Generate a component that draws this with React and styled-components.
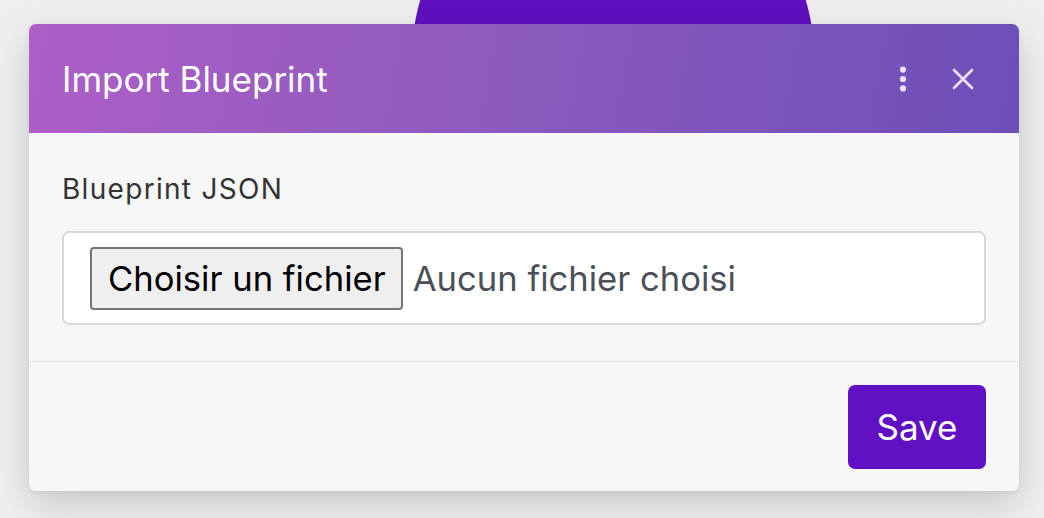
import React from "react";
import styled, { createGlobalStyle } from "styled-components";

const Global = createGlobalStyle`
  html, body { margin: 0; padding: 0; }
  body {
    background: #efefef;
    font-family: Inter, "Noto Sans", sans-serif;
    overflow: hidden;
  }
`;

const Stage = styled.div`
  position: relative;
  width: 1044px;
  height: 518px;
  padding: 24px 25px 27px 29px;
  box-sizing: border-box;
  overflow: hidden;
`;

const Blob = styled.div`
  position: absolute;
  left: 412px;
  top: -144px;
  width: 402px;
  height: 402px;
  border-radius: 50%;
  background: #6010bf;
`;

const Modal = styled.div`
  position: relative;
  width: 990px;
  height: 467px;
  border-radius: 7px;
  background: #f7f7f7;
  box-shadow: 0 14px 40px rgba(0, 0, 0, 0.16), 0 2px 6px rgba(0, 0, 0, 0.05);
  display: flex;
  flex-direction: column;
  overflow: hidden;
`;

const Header = styled.div`
  height: 109px;
  flex: none;
  display: flex;
  align-items: center;
  padding: 0 41px 0 33px;
  background: linear-gradient(100deg, #ad5fc7 0%, #8b5abd 50%, #6d4fb8 100%);
  color: #fff;
`;

const Title = styled.h1`
  flex: 1;
  margin: 0;
  font-size: 35px;
  font-weight: 400;
  line-height: 42px;
`;

const IconButton = styled.button`
  border: none;
  background: none;
  padding: 0;
  margin: 0;
  width: 30px;
  height: 30px;
  display: flex;
  align-items: center;
  justify-content: center;
  color: #ebe2f6;
  margin-left: ${(p) => p.$gap || 0}px;
  cursor: pointer;
`;

const Body = styled.div`
  flex: none;
  height: 229px;
  box-sizing: border-box;
  padding: 38px 33px 0;
  border-bottom: 1px solid #e6e6e6;
`;

const Label = styled.label`
  display: block;
  font-size: 28px;
  letter-spacing: 1.3px;
  color: #333;
  line-height: 36px;
  margin-bottom: 24px;
`;

const FileBox = styled.div`
  height: 94px;
  box-sizing: border-box;
  background: #fff;
  border: 2px solid #d9d9d9;
  border-radius: 7px;
  display: flex;
  align-items: center;
  padding: 0 26px;
`;

const FileButton = styled.span`
  height: 63px;
  box-sizing: border-box;
  padding: 0 15px 0 16px;
  display: flex;
  align-items: center;
  border: 2px solid #767676;
  border-radius: 4px;
  background: #efefef;
  color: #000;
  font-size: 34.6px;
`;

const FileName = styled.span`
  margin-left: 10px;
  font-size: 34.6px;
  color: #4b5058;
`;

const Footer = styled.div`
  flex: 1;
  display: flex;
  align-items: center;
  justify-content: flex-end;
  padding: 0 33px;
`;

const SaveButton = styled.button`
  width: 138px;
  height: 84px;
  border: none;
  border-radius: 7px;
  background: #6010c2;
  color: #fff;
  font-family: inherit;
  font-size: 35px;
  cursor: pointer;
`;

export default function App() {
  return (
    <>
      <Global />
      <Stage>
        <Blob />
        <Modal>
          <Header>
            <Title>Import Blueprint</Title>
            <IconButton aria-label="More">
              <svg width="8" height="26" viewBox="0 0 8 26">
                <circle cx="4" cy="3.6" r="3.1" fill="currentColor" />
                <circle cx="4" cy="13" r="3.1" fill="currentColor" />
                <circle cx="4" cy="22.4" r="3.1" fill="currentColor" />
              </svg>
            </IconButton>
            <IconButton aria-label="Close" $gap={30}>
              <svg width="22" height="22" viewBox="0 0 22 22">
                <path d="M2 2L20 20M20 2L2 20" stroke="currentColor" strokeWidth="2.6" strokeLinecap="round" />
              </svg>
            </IconButton>
          </Header>
          <Body>
            <Label>Blueprint JSON</Label>
            <FileBox>
              <FileButton>Choisir un fichier</FileButton>
              <FileName>Aucun fichier choisi</FileName>
            </FileBox>
          </Body>
          <Footer>
            <SaveButton>Save</SaveButton>
          </Footer>
        </Modal>
      </Stage>
    </>
  );
}
